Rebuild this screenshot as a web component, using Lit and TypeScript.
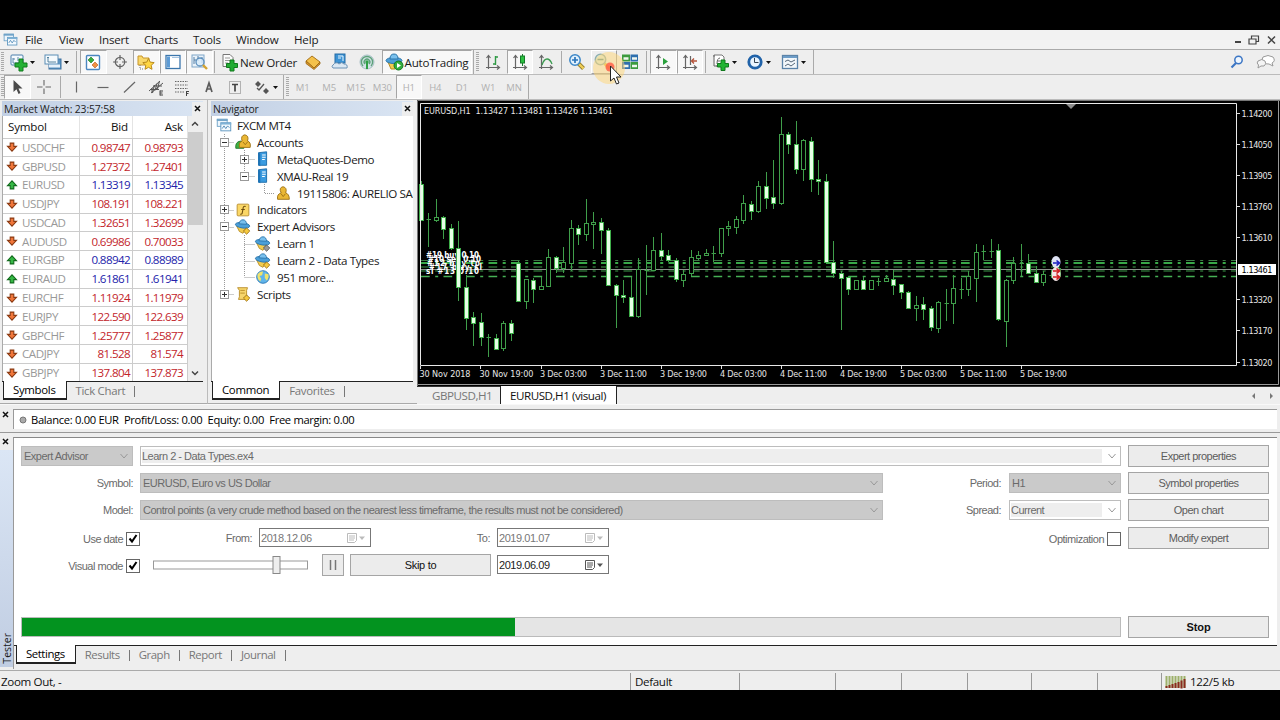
import { css, html, LitElement, svg, nothing } from "lit";
import type { SVGTemplateResult } from "lit";
import { customElement, property, state } from "lit/decorators.js";
import { classMap } from "lit/directives/class-map.js";
import { styleMap } from "lit/directives/style-map.js";

const icons: Record<string, SVGTemplateResult> = {
  app: svg`
    <rect x="2.5" y="3.5" width="11" height="8" fill="#eef6fc" stroke="#6fa3c8"/>
    <path d="M2 4.5h12" stroke="#6fa3c8" stroke-width="2"/>
    <rect x="6.5" y="7.5" width="11" height="9" fill="#f4fafe" stroke="#5b94be"/>
    <path d="M6 8.5h12" stroke="#7fb2d6" stroke-width="2"/>
    <path d="M8 14l2-3 2 3 2-3 2 2" fill="none" stroke="#4e88b5"/>`,
  newChart: svg`
    <rect x="2" y="3" width="12" height="10" rx="1" fill="#f4f9fd" stroke="#4b7fac"/>
    <path d="M4 6v5h8M4 7l2 0M9 5v4" fill="none" stroke="#5b87ab"/>
    <path d="M10 7h4v4h4v4h-4v4h-4v-4H6v-4h4z" fill="#25b135" stroke="#117a1d"/>`,
  profiles: svg`
    <rect x="6" y="7" width="12" height="10" fill="#5d95c3" stroke="#3d719f"/>
    <rect x="2" y="3" width="13" height="9" fill="#f5fafd" stroke="#5b8db5"/>
    <path d="M5 5v5h8M4 6l1-1 1 1" fill="none" stroke="#54829f"/>
    <path d="M6 14h11" stroke="#e7f1fa" stroke-width="3"/>`,
  marketWatch: svg`
    <rect x="3.5" y="3.5" width="13" height="14" rx="1" fill="#fff" stroke="#4b86c0" stroke-width="1.4"/>
    <path d="M8 5l3 3-3 3-3-3z" fill="#36ad3d" stroke="#1c7224" stroke-width=".6"/>
    <path d="M12 10l3 3-3 3-3-3z" fill="#f09043" stroke="#b85516" stroke-width=".6"/>`,
  dataWindow: svg`
    <circle cx="10" cy="10" r="4.7" fill="none" stroke="#666" stroke-width="1.3"/>
    <path d="M10 3v5M10 12v5M3 10h5M12 10h5" stroke="#666" stroke-width="1.2"/>`,
  navigator: svg`
    <path d="M2 4h4l1 2h6v7H2z" fill="#f9d86a" stroke="#c8962b"/>
    <path d="M4 13v4h4" fill="none" stroke="#777" stroke-dasharray="1 1"/>
    <path d="M12.500 6.500l1.700 3.600 4 .5-3 2.700.8 4-3.500-2-3.500 2 .8-4-3-2.700 4-.5z" fill="#ffd643" stroke="#b98a1b"/>`,
  terminal: svg`
    <rect x="3" y="3.500" width="14" height="13" fill="#fff" stroke="#3b76ac" stroke-width="1.3"/>
    <rect x="4" y="4.500" width="3" height="11" fill="#5d9cd6"/>
    <path d="M9 5.500h7" stroke="#a5c5e2"/>`,
  tester: svg`
    <rect x="3" y="3" width="12" height="12" fill="#eaf3fa" stroke="#7ea6c8"/>
    <path d="M5 5v7M9 4v5M13 5v6M5 8h2" stroke="#557fa5"/>
    <circle cx="11" cy="10" r="4" fill="#d7ebfa" fill-opacity=".8" stroke="#5b8ebc" stroke-width="1.3"/>
    <path d="M14 13l4 4" stroke="#d4a32f" stroke-width="2.400"/>`,
  newOrder: svg`
    <path d="M3 2.500h7l3 3v9H3z" fill="#fbfbfb" stroke="#777"/>
    <path d="M5 6h5M5 8.500h5M5 11h3" stroke="#999"/>
    <path d="M10 8h4v3.500h3.500v4H14V19h-4v-3.500H6.500v-4H10z" fill="#22ab33" stroke="#117a1d"/>`,
  metaEditor: svg`
    <path d="M3 9l6-5 8 6-6 6z" fill="#f4c14a" stroke="#a8741c"/>
    <path d="M3 9v2.500l8 6 6-5.500v-2l-6 6z" fill="#d7962a" stroke="#9a6714" stroke-width=".8"/>`,
  vps: svg`
    <rect x="5" y="2" width="10" height="9" fill="#3c93d4" stroke="#246ca6"/>
    <path d="M8 4h5v5M8 6h3" stroke="#e8f6ff" fill="none"/>
    <path d="M3 13q3-4 6-1 3-3 5 0 4 0 3 4H3q-2-2 0-3z" fill="#dbe8f3" stroke="#6b92b5"/>`,
  signals: svg`
    <circle cx="10" cy="10" r="7" fill="#d2e2e6" stroke="#a9bfc6"/>
    <path d="M6 14a5.600 5.600 0 1 1 8 0M8 12a2.800 2.800 0 1 1 4 0" fill="none" stroke="#5da27a" stroke-width="1.400"/>
    <circle cx="10" cy="10" r="1.700" fill="#2f9f46"/><path d="M10 11v6" stroke="#2f9f46" stroke-width="2"/>`,
  autoTrading: svg`
    <path d="M3 10h11l-4 7H6z" fill="#f3cc50" stroke="#b78d24"/>
    <ellipse cx="9" cy="8.500" rx="8" ry="3" fill="#4b9fd8" stroke="#2c76ab"/>
    <path d="M5 7q0-5 4-5t4 5z" fill="#79c0ed" stroke="#2c76ab"/>
    <circle cx="13.500" cy="13.500" r="4.500" fill="#32ae3c" stroke="#15761f"/>
    <path d="M12 11l4 2.500-4 2.500z" fill="#fff"/>`,
  bars: svg`
    <path d="M5.500 4v13M3 15.500h13M3.500 6l2-2.500 2 2.500M14 13.500l2.500 2-2.500 2" fill="none" stroke="#666" stroke-width="1.200"/>
    <path d="M12.500 4v9M10 12h2.500M12.500 5H15" stroke="#2e9a44" stroke-width="1.400"/>`,
  candles: svg`
    <path d="M5.500 4v13M3 15.500h13M3.500 6l2-2.500 2 2.500M14 13.500l2.500 2-2.500 2" fill="none" stroke="#666" stroke-width="1.200"/>
    <path d="M12.500 2v12" stroke="#167a28"/><rect x="10.500" y="4" width="4" height="7" fill="#2bc140" stroke="#167a28"/>`,
  line: svg`
    <path d="M5.500 4v13M3 15.500h13M3.500 6l2-2.500 2 2.500M14 13.500l2.500 2-2.500 2" fill="none" stroke="#666" stroke-width="1.200"/>
    <path d="M6 13q2-6 5-6t5 5" fill="none" stroke="#3a9a4f" stroke-width="1.300"/>`,
  zoomIn: svg`
    <path d="M11.500 11.500l5 5" stroke="#8f7a2a" stroke-width="4"/><path d="M12 12l4.500 4.500" stroke="#f0cf57" stroke-width="2.400"/>
    <circle cx="8" cy="8" r="5.200" fill="#e2f1fc" stroke="#3d87c7" stroke-width="1.500"/>
    <path d="M5 8h6M8 5v6" stroke="#2c76bb" stroke-width="1.700"/>`,
  zoomOut: svg`
    <path d="M10.500 11.500l5 5" stroke="#e5c050" stroke-width="3"/>
    <circle cx="6.500" cy="7.500" r="5.200" fill="#dcebdc" stroke="#8fb0b0" stroke-width="1.500"/>
    <path d="M3.500 7.500h6" stroke="#5e9292" stroke-width="1.500"/>`,
  tile: svg`
    <rect x="2" y="2.500" width="8" height="7" fill="#3c9b3e"/><rect x="10.500" y="2.500" width="7.500" height="7" fill="#2e6fae"/>
    <rect x="2" y="10" width="8" height="7" fill="#2e6fae"/><rect x="10.500" y="10" width="7.500" height="7" fill="#3c9b3e"/>
    <path d="M3.500 6.500h5M12 6.500h5M3.500 14h5M12 14h5" stroke="#f0f7ee" stroke-width="2.500"/>`,
  autoScroll: svg`
    <path d="M5.500 4v13M3 15.500h13M3.500 6l2-2.500 2 2.500M14 13.500l2.500 2-2.500 2" fill="none" stroke="#666" stroke-width="1.200"/>
    <path d="M10 6l5 3.500-5 3.500z" fill="#29a03b"/>`,
  shift: svg`
    <path d="M5.500 4v13M3 15.500h13M3.500 6l2-2.500 2 2.500M14 13.500l2.500 2-2.500 2M10.500 4v9" fill="none" stroke="#666" stroke-width="1.200"/>
    <path d="M17 9h-5M14 6.500L11.500 9l2.500 2.500" fill="none" stroke="#b5533a" stroke-width="1.300"/>`,
  indicators: svg`
    <path d="M3 5V3h8l2 2v9H5" fill="#fff" stroke="#777"/><path d="M3 3v11h8M6 12q0-6 3-6M6 9h3" fill="none" stroke="#666"/>
    <path d="M10 8h4v3.500h3.500v3.500H14V18.500h-4V15H6.500v-3.500H10z" fill="#22b433" stroke="#117a1d"/>`,
  periods: svg`
    <circle cx="10" cy="10" r="6.200" fill="#eaf5ff" stroke="#2163a9" stroke-width="2.800"/>
    <path d="M9.500 6v4.500h4" fill="none" stroke="#345"/>`,
  templates: svg`
    <rect x="2.500" y="3.500" width="15" height="13" fill="#f2f7fb" stroke="#5b83a8" stroke-width="1.300"/>
    <path d="M3 5h14" stroke="#6c9cc7" stroke-width="2"/><path d="M5 9.500l3-1.500 3 2 4-2M5 14l3-2 3 2 4-3" fill="none" stroke="#567"/>`,
  cursor: svg`<path d="M6.500 3v12l3-2.700 2 4.700 2-1-2-4.500h4z" fill="#4a4a4a"/>`,
  cross: svg`<path d="M10 3v5.500M10 11.500V17M3 10h5.500M11.500 10H17" stroke="#666" stroke-width="1.100"/>`,
  vline: svg`<path d="M10.500 4.500v11" stroke="#666" stroke-width="1.200"/>`,
  hline: svg`<path d="M4.500 10.500h11" stroke="#666" stroke-width="1.200"/>`,
  trend: svg`<path d="M5 15.500L16 5" stroke="#666" stroke-width="1.200"/>`,
  channel: svg`
    <path d="M3 14L14 4M5 16L17 6M6 11v4M8.500 8l-2 8M11 6.500l-2 7M13.500 4l-2 8M4 12.500h9M7 9h9" stroke="#555"/>
    <path d="M14 13.500v5M14 14h3M14 16h2.500M14 18h3" stroke="#444"/>`,
  fibo: svg`
    <path d="M3 4.500h13M3 8h13M3 11.500h13M3 15h9" stroke="#666" stroke-dasharray="1.500 1"/>
    <path d="M14.500 14v5M14 14.500h3M14 16.500h2.500" stroke="#444"/>`,
  textA: svg`<path d="M7 15L10 6l3 9M8 12h4" fill="none" stroke="#5b5b5b" stroke-width="1.700"/>`,
  label: svg`
    <rect x="4.500" y="4.500" width="11" height="12" fill="none" stroke="#777" stroke-dasharray="1 1"/>
    <path d="M7 7.500h6M10 7v7.500" stroke="#444" stroke-width="1.700"/>`,
  arrows: svg`
    <path d="M3 7l3-3 3 3-3 3zM11 14l3-3 3 3-3 3z" fill="#555"/><path d="M5 11l2 2 5-6" fill="none" stroke="#555" stroke-width="1.300"/>`,
  down: svg`<path d="M7 3.500h6V9h4.500L10 17 2.500 9H7z" fill="#f0763a" stroke="#8a3a12" stroke-width="1.800"/>`,
  up: svg`<path d="M7 16.500h6V11h4.500L10 3 2.500 11H7z" fill="#35b845" stroke="#126a1d" stroke-width="1.800"/>`,
  accounts: svg`
    <path d="M2 17q-1-7 5-8 5 1 4 8z" fill="#3cb043" stroke="#24752a"/>
    <path d="M6 16q-1-6 3-7-2-6 3-7 5 1 3 7 4 1 3 7z" fill="#eab734" stroke="#9b6f12"/>
    <path d="M10 10l2.500 3 2.500-3" fill="none" stroke="#9b6f12"/>`,
  server: svg`
    <path d="M5 3l9-1v15H5z" fill="#3a9be0" stroke="#1a6aa8"/><path d="M5 3v14l2 1V4z" fill="#1c74b8"/>
    <path d="M9 5.500h4M9 8h4M9 10.500h3" stroke="#fff" stroke-width="1.200"/>`,
  person: svg`
    <path d="M4 17q-1-6 4-7-3-6 2-7 5 1 3 7 4 1 4 7z" fill="#eab734" stroke="#9b6f12"/>
    <path d="M8 11l2.200 3 2.300-3" fill="none" stroke="#9b6f12"/>`,
  func: svg`
    <rect x="3.500" y="3.500" width="13" height="13" rx="1" fill="#fbd766" stroke="#b98d2c"/>
    <path d="M13 6q-3-1-3 3l-1 5q-1 1-2 .5M8 9.500h4" fill="none" stroke="#6d4c10" stroke-width="1.200"/>`,
  expert: svg`
    <path d="M3 9l11 1-4 7-4-2z" fill="#f3cc50" stroke="#b78d24"/>
    <ellipse cx="9.500" cy="8" rx="8" ry="3" fill="#4b9fd8" stroke="#2c76ab" transform="rotate(8 9 8)"/>
    <path d="M5.500 6.500q1-4.500 4.500-4.500t4 5z" fill="#79c0ed" stroke="#2c76ab"/>
    <path d="M14 11l3.500 3.500L14 18l-3.500-3.500z" fill="#f6c93e" stroke="#9b6f12"/>`,
  expertGrey: svg`
    <path d="M3 9l11 1-4 7-4-2z" fill="#f3cc50" stroke="#b78d24"/>
    <ellipse cx="9.500" cy="8" rx="8" ry="3" fill="#4b9fd8" stroke="#2c76ab" transform="rotate(8 9 8)"/>
    <path d="M5.500 6.500q1-4.500 4.500-4.500t4 5z" fill="#79c0ed" stroke="#2c76ab"/>
    <path d="M14 11l3.500 3.500L14 18l-3.500-3.500z" fill="#999" stroke="#555"/>`,
  globe: svg`
    <circle cx="10" cy="10" r="7" fill="#5fb4ea" stroke="#2d77b3"/>
    <path d="M4 7q3-4 6-3l-1 4-3 1 2 3-1 3q-4-3-3-8zM12 6l4 1q1 4-2 7l-2-3z" fill="#f2e36a"/>`,
  script: svg`
    <path d="M4 3h11l-1 3v7l2 3H5l1-3V6z" fill="#f7d66c" stroke="#b88c28"/>
    <path d="M7 6h5M7 9h5" stroke="#b88c28"/>
    <path d="M14 11l3.500 3.500L14 18l-3.500-3.500z" fill="#f6c93e" stroke="#9b6f12"/>`,
};

const icon = (name: string, size = 20) => html`
  <svg width=${size} height=${size} viewBox="0 0 20 20">${icons[name]}</svg>
`;

const caret = html`
  <svg width="7" height="20" viewBox="0 0 7 20"><path d="M1 9h5l-2.500 3z" fill="#111" /></svg>
`;

interface Tool {
  icon?: string;
  text?: string;
  kind?: "sep" | "grip" | "edge";
  menu?: boolean;
  pressed?: boolean;
  hover?: boolean;
  width?: number;
}

const MAIN_TOOLS: Tool[] = [
  { kind: "grip", width: 5.5 },
  { icon: "newChart", menu: true, width: 34 },
  { icon: "profiles", menu: true, width: 34 },
  { kind: "sep", width: 6.5 },
  { icon: "marketWatch", pressed: true },
  { icon: "dataWindow" },
  { icon: "navigator", pressed: true },
  { icon: "terminal", pressed: true },
  { icon: "tester", pressed: true },
  { kind: "sep", width: 4.5 },
  { icon: "newOrder", text: "New Order", width: 83 },
  { icon: "metaEditor" },
  { icon: "vps" },
  { icon: "signals", width: 28.5 },
  { icon: "autoTrading", text: "AutoTrading", pressed: true, width: 90 },
  { kind: "edge", width: 3 },
  { kind: "grip", width: 5.5 },
  { icon: "bars" },
  { icon: "candles", pressed: true },
  { icon: "line" },
  { kind: "sep", width: 4.5 },
  { icon: "zoomIn" },
  { icon: "zoomOut", hover: true },
  { icon: "tile" },
  { kind: "sep", width: 6.5 },
  { icon: "autoScroll", pressed: true },
  { icon: "shift", pressed: true },
  { kind: "sep", width: 4 },
  { icon: "indicators", menu: true, width: 34 },
  { icon: "periods", menu: true, width: 35 },
  { icon: "templates", menu: true, width: 35 },
  { kind: "edge", width: 4 },
];

const DRAW_TOOLS: Tool[] = [
  { kind: "grip", width: 4 },
  { icon: "cursor", pressed: true },
  { icon: "cross" },
  { kind: "sep", width: 6 },
  { icon: "vline" },
  { icon: "hline" },
  { icon: "trend" },
  { icon: "channel" },
  { icon: "fibo" },
  { icon: "textA" },
  { icon: "label" },
  { icon: "arrows", menu: true, width: 33 },
  { kind: "edge", width: 3 },
  { kind: "grip", width: 5 },
  { text: "M1" },
  { text: "M5" },
  { text: "M15" },
  { text: "M30" },
  { text: "H1", pressed: true },
  { text: "H4" },
  { text: "D1" },
  { text: "W1" },
  { text: "MN", width: 25 },
  { kind: "edge", width: 3 },
];

const QUOTES: [string, string, string, boolean][] = [
  ["USDCHF", "0.98747", "0.98793", false],
  ["GBPUSD", "1.27372", "1.27401", false],
  ["EURUSD", "1.13319", "1.13345", true],
  ["USDJPY", "108.191", "108.221", false],
  ["USDCAD", "1.32651", "1.32699", false],
  ["AUDUSD", "0.69986", "0.70033", false],
  ["EURGBP", "0.88942", "0.88989", true],
  ["EURAUD", "1.61861", "1.61941", true],
  ["EURCHF", "1.11924", "1.11979", false],
  ["EURJPY", "122.590", "122.639", false],
  ["GBPCHF", "1.25777", "1.25877", false],
  ["CADJPY", "81.528", "81.574", false],
  ["GBPJPY", "137.804", "137.873", false],
];

interface TreeNode {
  depth: number;
  icon: string;
  text: string;
  box?: "+" | "-";
}

const TREE: TreeNode[] = [
  { depth: 0, icon: "app", text: "FXCM MT4" },
  { depth: 1, icon: "accounts", text: "Accounts", box: "-" },
  { depth: 2, icon: "server", text: "MetaQuotes-Demo", box: "+" },
  { depth: 2, icon: "server", text: "XMAU-Real 19", box: "-" },
  { depth: 3, icon: "person", text: "19115806: AURELIO SAN" },
  { depth: 1, icon: "func", text: "Indicators", box: "+" },
  { depth: 1, icon: "expert", text: "Expert Advisors", box: "-" },
  { depth: 2, icon: "expertGrey", text: "Learn 1" },
  { depth: 2, icon: "expert", text: "Learn 2 - Data Types" },
  { depth: 2, icon: "globe", text: "951 more..." },
  { depth: 1, icon: "script", text: "Scripts", box: "+" },
];

// high, body top, body bottom, low, kind: f = bear, h = bull, x = doji
type Candle = [number, number, number, number, string];

const CANDLES: Candle[] = [
  [181, 184, 220, 220, "f"], [213, 219, 220, 247, "x"], [199, 217, 220, 222, "h"],
  [216, 217, 229, 239, "f"], [224, 228, 248, 250, "f"], [221, 248, 287, 301, "f"],
  [275, 287, 318, 330, "f"], [312, 317, 323, 346, "f"], [313, 322, 337, 346, "f"],
  [334, 337, 337, 357, "x"], [334, 338, 349, 350, "f"], [321, 323, 348, 351, "h"],
  [320, 323, 333, 341, "f"], [261, 263, 301, 302, "f"], [279, 279, 301, 309, "h"],
  [278, 280, 289, 303, "f"], [277, 286, 289, 290, "h"], [249, 257, 286, 286, "h"],
  [256, 257, 268, 273, "f"], [247, 262, 268, 273, "h"], [220, 228, 263, 271, "h"],
  [225, 228, 234, 245, "f"], [199, 223, 234, 241, "h"], [212, 222, 224, 249, "h"],
  [218, 222, 230, 254, "f"], [228, 230, 285, 286, "f"], [284, 285, 295, 328, "f"],
  [280, 295, 297, 303, "f"], [277, 297, 316, 317, "f"], [258, 269, 316, 318, "h"],
  [245, 270, 270, 295, "x"], [237, 250, 270, 271, "h"], [233, 250, 256, 260, "f"],
  [250, 255, 260, 262, "f"], [258, 260, 279, 282, "f"], [270, 274, 280, 287, "h"],
  [250, 257, 273, 276, "h"], [251, 255, 258, 260, "h"], [249, 253, 255, 256, "h"],
  [246, 253, 253, 262, "x"], [228, 228, 253, 257, "h"], [221, 226, 228, 236, "h"],
  [216, 219, 227, 234, "h"], [195, 203, 220, 224, "h"], [201, 204, 211, 220, "f"],
  [181, 186, 211, 213, "h"], [172, 186, 198, 209, "f"], [160, 197, 203, 209, "f"],
  [117, 134, 203, 205, "h"], [132, 134, 144, 154, "f"], [121, 144, 169, 174, "f"],
  [139, 140, 169, 181, "h"], [137, 141, 179, 192, "f"], [160, 179, 181, 195, "f"],
  [174, 181, 262, 263, "f"], [241, 262, 273, 278, "f"], [271, 273, 278, 330, "f"],
  [276, 277, 289, 295, "f"], [280, 280, 289, 289, "h"], [277, 280, 289, 290, "f"],
  [280, 280, 289, 289, "h"], [278, 281, 281, 286, "x"], [275, 278, 281, 282, "h"],
  [270, 279, 285, 295, "f"], [284, 284, 292, 299, "f"], [291, 292, 308, 308, "f"],
  [296, 305, 308, 321, "h"], [297, 304, 309, 320, "f"], [306, 308, 327, 331, "f"],
  [301, 302, 328, 333, "h"], [289, 303, 303, 321, "x"], [275, 288, 303, 324, "h"],
  [278, 289, 289, 299, "x"], [271, 276, 289, 296, "h"], [244, 252, 278, 302, "h"],
  [245, 251, 251, 260, "x"], [239, 251, 251, 258, "x"], [244, 250, 319, 321, "f"],
  [279, 280, 321, 347, "h"], [257, 263, 280, 284, "h"], [244, 263, 263, 276, "x"],
  [254, 263, 273, 274, "f"], [266, 273, 282, 283, "f"], [271, 274, 282, 286, "h"],
  [270, 275, 275, 278, "x"], [266, 268, 276, 277, "h"],
];

const PRICES: [number, string][] = [
  [113.5, "1.14200"], [144.5, "1.14050"], [175.5, "1.13905"], [206.5, "1.13760"], [237.5, "1.13610"],
  [299.5, "1.13320"], [330.5, "1.13170"], [362.5, "1.13020"],
];

const TIMES: [number, string, number][] = [
  [419.5, "30 Nov 2018", 51], [479.5, "30 Nov 19:00", 54], [540, "3 Dec 03:00", 47],
  [600, "3 Dec 11:00", 47], [660, "3 Dec 19:00", 47], [720, "4 Dec 03:00", 47],
  [780, "4 Dec 11:00", 47], [840, "4 Dec 19:00", 47], [900, "5 Dec 03:00", 47],
  [960, "5 Dec 11:00", 47], [1020, "5 Dec 19:00", 47],
];

const LEVELS: [number, number, string][] = [
  [260.5, 1, "#3d7a45"], [263, 2, "#38a848"], [267, 1, "#3d9a49"], [271, 1, "#3d9a49"], [276.5, 1.4, "#46b055"],
];

const LABELS: [number, number, string][] = [
  [426, 258, "#19 buy 0.10"], [428, 262, "#10 sell 0.10"], [427, 266, "#12 buy tp"],
  [429, 270, "#17 buy sl"], [426, 274, "sl #13 0.10"],
];

@customElement("price-chart")
export class PriceChart extends LitElement {
  renderCandle([high, top, bottom, low, kind]: Candle, i: number) {
    const x = 421 + i * 7.5;
    const cx = Math.floor(x) + 0.5;
    if (kind === "x") {
      return svg`<path class="wick" d="M${cx} ${high}V${low}M${cx - 2} ${top + 0.5}h4.5" />`;
    }
    return svg`
      <path class="wick" d="M${cx} ${high}V${low}" />
      <rect class=${kind} x=${cx - 2} y=${top + 0.5} width="4" height=${bottom - top} />
    `;
  }

  render() {
    return html`
      <svg width="863" height="286" viewBox="417 100 863 286">
        <rect x="417" y="100" width="863" height="286" fill="#000" />
        <path d="M417.500 386V100.500H1280" fill="none" stroke="#777" />
        <path d="M1278.500 101V384.500H418" fill="none" stroke="#999" />
        ${LEVELS.map(
          ([y, w, color]) =>
            svg`<path d="M421 ${y}H1236" stroke=${color} stroke-width=${w} stroke-dasharray="8.700 5.500 3 5.300" />`
        )}
        <path d="M421 269.500H1236" stroke="#8d918d" stroke-width="1" />
        ${LABELS.map(([x, y, text]) => svg`<text class="order" x=${x} y=${y} textLength="53">${text}</text>`)}
        ${CANDLES.map((c, i) => this.renderCandle(c, i))}
        <ellipse cx="1056" cy="262" rx="4.500" ry="6" fill="#dfe3f4" />
        <ellipse cx="1056" cy="274" rx="4.500" ry="7" fill="#f5e6e6" />
        <path d="M1053 263h6M1056.500 260.500l3 2.500-3 2.500" fill="none" stroke="#1a1fc0" stroke-width="1.600" />
        <path d="M1053 271h6M1056.500 268.500l3 2.500-3 2.500M1053 277h6M1056.500 274.500l3 2.500-3 2.500"
          fill="none" stroke="#d11c1c" stroke-width="1.600" />
        <path d="M420.500 365.500V103.500H1236.500V365.500z" fill="none" stroke="#e8e8e8" />
        <path d="M1066 104h10l-5 5z" fill="#8c8c8c" />
        <text class="axis" x="424" y="114" textLength="189">EURUSD,H1&#160; 1.13427 1.13481 1.13426 1.13461</text>
        ${PRICES.map(
          ([y, text]) => svg`
            <path d="M1237 ${y}h3" stroke="#ddd" />
            <text class="axis" x="1241.500" y=${y + 3.5} textLength="31">${text}</text>`
        )}
        <rect x="1238" y="264" width="38" height="11" fill="#fff" />
        <text class="axis now" x="1241.500" y="273" textLength="31">1.13461</text>
        ${TIMES.map(
          ([x, text, len]) => svg`
            <path d="M${Math.floor(x) + 1.5} 366v3" stroke="#ddd" />
            <text class="axis" x=${x} y="377" textLength=${len}>${text}</text>`
        )}
      </svg>
    `;
  }

  static styles = css`
    :host {
      display: block;
      height: 286px;
    }

    svg {
      display: block;
    }

    .wick {
      stroke: #3f9e4a;
      stroke-width: 1;
      fill: none;
    }

    .f {
      fill: #e6ffe6;
      stroke: #3fae4a;
    }

    .h {
      fill: #000;
      stroke: #3f9e4a;
    }

    .axis,
    .order {
      font-family: "DejaVu Sans Condensed", "DejaVu Sans", sans-serif;
      font-size: 9px;
      fill: #e6e6e6;
    }

    .order {
      font-weight: bold;
      font-size: 8px;
      fill: #fff;
    }

    .now {
      fill: #000;
    }
  `;
}

@customElement("tab-strip")
export class TabStrip extends LitElement {
  @property({ type: Array })
  tabs: string[] = [];

  @property()
  active: string = "";

  render() {
    return html`
      ${this.tabs.map(
        (tab) => html`<span class=${classMap({ tab: true, active: tab === this.active })}>${tab}</span>`
      )}
    `;
  }

  static styles = css`
    :host {
      display: flex;
      box-sizing: border-box;
      height: 19px;
      border-top: 1px solid #222;
      color: #777;
      font-size: 11.4px;
    }

    .tab {
      padding: 0 10px 0 9px;
      line-height: 17px;
      position: relative;
    }

    .tab:not(.active)::after {
      content: "";
      position: absolute;
      right: 0;
      top: 4px;
      height: 11px;
      border-right: 1px solid #777;
    }

    .active {
      margin-top: -1px;
      height: 19px;
      border: 1px solid #222;
      border-top: 0;
      border-bottom-width: 2px;
      background: #fff;
      color: #000;
      box-sizing: border-box;
    }
  `;
}

@customElement("app-root")
export class AppRoot extends LitElement {
  @state()
  progress = 494 / 1100;

  renderTool(t: Tool) {
    const width = { width: `${t.width ?? 26.5}px` };
    if (t.kind) {
      return html`<span class=${t.kind} style=${styleMap(width)}></span>`;
    }
    return html`
      <span
        class=${classMap({ tool: true, pressed: !!t.pressed, hover: !!t.hover, period: !t.icon })}
        style=${styleMap(width)}
      >
        ${t.icon ? icon(t.icon) : nothing}${t.text ? html`<b>${t.text}</b>` : nothing}${t.menu ? caret : nothing}
      </span>
    `;
  }

  renderTitle(text: string) {
    return html`<div class="title"><span>${text}</span><span class="close">${this.cross()}</span></div>`;
  }

  cross() {
    return html`
      <svg width="7" height="7" viewBox="0 0 7 7"><path d="M1 1l5 5M6 1L1 6" stroke="#111" stroke-width="1.500" /></svg>
    `;
  }

  renderMarketWatch() {
    return html`
      <section class="dock watch">
        ${this.renderTitle("Market Watch: 23:57:58")}
        <div class="quotes">
          <div class="table">
            <div class="quote head"><span>Symbol</span><span>Bid</span><span>Ask</span></div>
            ${QUOTES.map(
              ([name, bid, ask, up]) => html`
                <div class=${classMap({ quote: true, up })}>
                  <span>${icon(up ? "up" : "down", 12)}${name}</span><span>${bid}</span><span>${ask}</span>
                </div>
              `
            )}
          </div>
          <div class="scroll">
            <svg width="14" height="14" viewBox="0 0 14 14"><path d="M4 9.500l3-3 3 3" fill="none" stroke="#444" stroke-width="1.500" /></svg>
            <i></i>
            <svg width="14" height="14" viewBox="0 0 14 14"><path d="M4 4.500l3 3 3-3" fill="none" stroke="#444" stroke-width="1.500" /></svg>
          </div>
        </div>
        <tab-strip .tabs=${["Symbols", "Tick Chart"]} active="Symbols"></tab-strip>
      </section>
    `;
  }

  renderNavigator() {
    return html`
      <section class="dock nav">
        ${this.renderTitle("Navigator")}
        <div class="tree">
          <svg class="guides" width="200" height="264" viewBox="0 0 200 264">
            <path
              d="M12.500 18V178M12.500 26.500H22M12.500 94.500H22M12.500 111.500H22M12.500 178.500H22M32.500 34V60M32.500 43.500H43M32.500 60.500H43M52.500 68V77.500H63M32.500 119V161M32.500 128.500H43M32.500 145.500H43M32.500 161.500H43"
              fill="none" stroke="#999" stroke-dasharray="1 1"
            />
          </svg>
          ${TREE.map(
            (n) => html`
              <div class="node d${n.depth}">
                <span class="box">${n.box
                  ? html`<svg width="9" height="9" viewBox="0 0 9 9">
                      <rect x=".5" y=".5" width="8" height="8" fill="#fff" stroke="#999" />
                      <path d=${n.box === "+" ? "M2 4.500h5M4.500 2v5" : "M2 4.500h5"} stroke="#333" />
                    </svg>`
                  : nothing}</span>
                ${icon(n.icon, 18)}<span>${n.text}</span>
              </div>
            `
          )}
        </div>
        <tab-strip .tabs=${["Common", "Favorites"]} active="Common"></tab-strip>
      </section>
    `;
  }

  renderChevron() {
    return html`
      <svg class="chev" width="10" height="8" viewBox="0 0 10 8"><path d="M1.500 2L5 6l3.500-4" fill="none" stroke="#999" /></svg>
    `;
  }

  renderSelect(text: string, cls: string) {
    return html`<div class="select ${cls}"><span>${text}</span>${this.renderChevron()}</div>`;
  }

  renderDate(text: string, enabled = false) {
    return html`
      <div class=${classMap({ date: true, enabled })}>
        <span>${text}</span>
        <svg width="21" height="14" viewBox="0 0 21 14" fill="none" stroke="currentColor">
          <path d="M.5 2.500h9v7l-2 2h-7zM2 5h6M2 7h6M2 9h5" />
          <path d="M12 5.500h6l-3 3.500z" fill="currentColor" stroke="none" />
        </svg>
      </div>
    `;
  }

  renderCheck(checked: boolean) {
    return html`
      <svg class="check" width="14" height="14" viewBox="0 0 14 14">
        <rect x=".5" y=".5" width="13" height="13" fill="#fff" stroke="#666" />
        ${checked ? svg`<path d="M3.500 6.500l2.500 3L10.500 3" fill="none" stroke="#000" stroke-width="2" />` : nothing}
      </svg>
    `;
  }

  renderTester() {
    return html`
      <section class="tester">
        <div class="side">
          <span class="close">${this.cross()}</span>
          <div class="side-title"><span>Tester</span></div>
        </div>
        <div class="body">
          <div class="form">
            <div class="row">
              ${this.renderSelect("Expert Advisor", "grey kind")}
              ${this.renderSelect("Learn 2 - Data Types.ex4", "light file")}
              <button>Expert properties</button>
            </div>
            <div class="row">
              <label class="lead">Symbol:</label>
              ${this.renderSelect("EURUSD, Euro vs US Dollar", "grey wide")}
              <label class="mid">Period:</label>
              ${this.renderSelect("H1", "grey short")}
              <button>Symbol properties</button>
            </div>
            <div class="row">
              <label class="lead">Model:</label>
              ${this.renderSelect(
                "Control points (a very crude method based on the nearest less timeframe, the results must not be considered)",
                "grey wide"
              )}
              <label class="mid">Spread:</label>
              ${this.renderSelect("Current", "light short")}
              <button>Open chart</button>
            </div>
            <div class="row">
              <label class="lead with-check">Use date ${this.renderCheck(true)}</label>
              <label class="from">From:</label>
              ${this.renderDate("2018.12.06")}
              <label class="to">To:</label>
              ${this.renderDate("2019.01.07")}
              <label class="opt with-check">Optimization ${this.renderCheck(false)}</label>
              <button>Modify expert</button>
            </div>
            <div class="row">
              <label class="lead with-check">Visual mode ${this.renderCheck(true)}</label>
              <svg class="slider" width="157" height="18" viewBox="0 0 157 18">
                <rect x=".5" y="5" width="154" height="8" fill="#fff" stroke="#999" />
                <rect x="120" y=".5" width="7" height="17" fill="#eee" stroke="#888" />
              </svg>
              <button class="pause">
                <svg width="10" height="12" viewBox="0 0 10 12"><path d="M2.500 1v10M7.500 1v10" stroke="#777" stroke-width="1.500" /></svg>
              </button>
              <button class="skip">Skip to</button>
              ${this.renderDate("2019.06.09", true)}
            </div>
            <div class="row run">
              <div class="progress"><i style=${styleMap({ width: `${this.progress * 100}%` })}></i></div>
              <button class="stop">Stop</button>
            </div>
          </div>
          <tab-strip .tabs=${["Settings", "Results", "Graph", "Report", "Journal"]} active="Settings"></tab-strip>
        </div>
      </section>
    `;
  }

  render() {
    return html`
      <div class="window">
        <nav class="menu">
          ${icon("app", 17)}
          <span class="m-file">File</span><span class="m-view">View</span><span class="m-insert">Insert</span
          ><span class="m-charts">Charts</span><span class="m-tools">Tools</span><span class="m-window">Window</span
          ><span>Help</span>
          <svg class="controls" width="46" height="12" viewBox="0 0 46 12" fill="none" stroke="#444">
            <path d="M1 8h6" stroke-width="2" />
            <path d="M17.500 4.500V2h7v5.500H22M15 5h7v5h-7z" stroke-width="1.200" />
            <path d="M34 2.500l7 7M41 2.500l-7 7" stroke-width="1.500" />
          </svg>
        </nav>
        <div class="bar main-bar">
          ${MAIN_TOOLS.map((t) => this.renderTool(t))}
          <span class="right-tools">
            <svg width="14" height="14" viewBox="0 0 14 14">
              <circle cx="8.500" cy="5" r="3.700" fill="#eef6ff" stroke="#3c76c4" stroke-width="1.500" />
              <path d="M6 8l-4.500 4.500" stroke="#3c76c4" stroke-width="2.200" />
            </svg>
            <svg width="20" height="14" viewBox="0 0 20 14">
              <path d="M7 2q5-3 10 0 3 4-1 6l1 3-4-2q-6 0-7-3 0-2 1-4z" fill="#fff" stroke="#999" />
              <path d="M2 6q4-3 7 0 2 3-1 5H5l-3 2 .5-3Q0 8 2 6z" fill="#f4f4f4" stroke="#999" />
            </svg>
          </span>
        </div>
        <div class="bar draw-bar">${DRAW_TOOLS.map((t) => this.renderTool(t))}</div>
        <main>
          ${this.renderMarketWatch()} ${this.renderNavigator()}
          <section class="charts">
            <price-chart></price-chart>
            <div class="chart-tabs">
              <span>GBPUSD,H1</span><span class="on">EURUSD,H1 (visual)</span>
              <svg width="24" height="8" viewBox="0 0 24 8" fill="#777"><path d="M4 1v6L1 4zM19 1v6l3-3z" /></svg>
            </div>
          </section>
        </main>
        <div class="account">
          <span class="close">${this.cross()}</span>
          <div class="line">
            <svg width="8" height="8" viewBox="0 0 8 8"><circle cx="4" cy="4" r="3" fill="#aaa" stroke="#777" /></svg>
            <span>Balance: 0.00 EUR&nbsp; Profit/Loss: 0.00&nbsp; Equity: 0.00&nbsp; Free margin: 0.00</span>
          </div>
        </div>
        ${this.renderTester()}
        <footer>
          <span class="hint">Zoom Out, -</span><span class="profile">Default</span><span class="c1"></span
          ><span class="c2"></span><span class="c2"></span><span class="c3"></span><span class="c2"></span
          ><span class="c3"></span>
          <span class="net">
            <svg width="23" height="14" viewBox="0 0 23 14">
              <path d="M1.500 1v12M4.500 1v12M7.500 1v12M10.500 1v12M13.500 1v12M16.500 1v12M19.500 1v12" stroke="#9db06a" stroke-width="2" />
              <path d="M1.500 11v2M4.500 10v3M7.500 9v4M10.500 8v5M13.500 7v6M16.500 5.500v8M19.500 4v9" stroke="#8a2a1e" stroke-width="2" />
            </svg>
            122/5 kb
          </span>
        </footer>
      </div>
      <svg class="pointer" width="34" height="38" viewBox="0 0 34 38">
        <circle cx="17" cy="17" r="16" fill="#ffd573" fill-opacity=".5" />
        <circle cx="18" cy="16" r="4.500" fill="#ff5a45" fill-opacity=".8" />
        <path d="M18.500 15v15l3.500-3 2.500 6 2.500-1-2.500-6h4.500z" fill="#fff" stroke="#222" />
      </svg>
    `;
  }

  static styles = css`
    :host {
      display: block;
      box-sizing: border-box;
      width: 1280px;
      height: 720px;
      padding: 30px 0;
      overflow: hidden;
      background: #000;
      position: relative;
      font-family: "Open Sans", "Noto Sans", sans-serif;
      font-size: 11.6px;
      color: #1a1a1a;
    }

    * {
      box-sizing: border-box;
    }

    svg {
      flex: none;
    }

    .window {
      height: 660px;
      background: #eee;
      display: flex;
      flex-direction: column;
      overflow: hidden;
      white-space: nowrap;
    }

    .menu {
      height: 19px;
      flex: none;
      display: flex;
      align-items: center;
      padding-left: 2px;
      background: #f2f2f2;
      letter-spacing: -0.2px;
    }

    .m-file {
      margin-left: 6px;
      width: 34px;
    }

    .m-view {
      width: 40px;
    }

    .m-insert {
      width: 45px;
    }

    .m-charts {
      width: 49px;
    }

    .m-tools {
      width: 43px;
    }

    .m-window {
      width: 58px;
    }

    .controls {
      margin-left: auto;
    }

    .bar {
      height: 25px;
      flex: none;
      display: flex;
      align-items: center;
      border-top: 1px solid #aaa;
    }

    .draw-bar {
      height: 26px;
      border-top-color: #bbb;
      border-bottom: 1px solid #bbb;
    }

    .tool {
      height: 24px;
      flex: none;
      display: flex;
      align-items: center;
      justify-content: center;
      border: 1px solid transparent;
      background-clip: padding-box;
    }

    .tool b {
      font-weight: 400;
      letter-spacing: -0.25px;
    }

    .period b {
      font-size: 9.5px;
      letter-spacing: -0.1px;
      color: #b0b0b0;
    }

    .pressed {
      border-color: #a5a5a5 #fff #fff #a5a5a5;
      background: #f8f8f8;
    }

    .hover {
      border-color: #fff #a0a0a0 #a0a0a0 #fff;
    }

    .sep,
    .edge {
      height: 22px;
      flex: none;
      background: linear-gradient(#aaa, #aaa) center / 1px 100% no-repeat;
    }

    .edge {
      height: 24px;
    }

    .grip {
      height: 20px;
      flex: none;
      background: repeating-linear-gradient(#aaa 0 1px, #eee 1px 2px) center / 3px 100% no-repeat;
    }

    .right-tools {
      margin-left: auto;
      padding-right: 4px;
      display: flex;
      gap: 12px;
    }

    main {
      height: 305px;
      flex: none;
      display: flex;
    }

    .dock {
      display: flex;
      flex-direction: column;
      height: 304px;
      padding-top: 1px;
      border-bottom: 1px solid #aaa;
    }

    .watch {
      width: 208px;
      padding-left: 2px;
      padding-right: 4px;
      border-right: 1px solid #bbb;
    }

    .nav {
      width: 209px;
      padding-left: 3px;
      padding-right: 4px;
    }

    .title {
      height: 15px;
      flex: none;
      display: flex;
      align-items: center;
      justify-content: space-between;
      padding-left: 2px;
      background: linear-gradient(90deg, #c2d0e4, #dae5f3);
      font-size: 10.4px;
      letter-spacing: -0.15px;
      color: #222;
    }

    .close {
      width: 11px;
      height: 14px;
      display: flex;
      align-items: center;
      justify-content: center;
      background: #eee;
    }

    .quotes {
      height: 265px;
      display: flex;
      overflow: hidden;
      background: #fff;
      border-left: 1px solid #aaa;
    }

    .table {
      width: 185px;
    }

    .quote {
      height: 18.77px;
      display: grid;
      grid-template-columns: 77px 53px 55px;
      align-items: stretch;
      color: #c2252b;
      border-bottom: 1px solid #ccc;
      letter-spacing: -0.6px;
    }

    .quote span {
      display: flex;
      align-items: center;
      justify-content: flex-end;
      padding-right: 2px;
      border-right: 1px solid #ccc;
    }

    .quote span:last-child {
      padding-right: 4px;
    }

    .quote span:first-child {
      justify-content: flex-start;
      padding-left: 3px;
      gap: 4px;
      color: #999;
      letter-spacing: -0.45px;
    }

    .quote.up {
      color: #2222aa;
    }

    .quote.head,
    .quote.head span:first-child {
      color: #111;
      letter-spacing: -0.2px;
    }

    .quote.head {
      height: 22.5px;
    }

    .quote.head span {
      border-color: #e4e4e4;
      padding-right: 4px;
    }

    .quote.head span:first-child {
      padding-left: 5px;
    }

    .scroll {
      width: 15px;
      background: #eee;
      display: flex;
      flex-direction: column;
    }

    .scroll i {
      height: 93px;
      margin-top: 2px;
      margin-bottom: auto;
      background: #cdcdcd;
    }

    .tree {
      height: 265px;
      background: #fff;
      border-left: 1px solid #aaa;
      overflow: hidden;
      position: relative;
      letter-spacing: -0.4px;
    }

    .guides {
      position: absolute;
      left: 0;
      top: 0;
    }

    .node {
      height: 16.9px;
      display: flex;
      align-items: center;
      position: relative;
      top: 1px;
    }

    .node span:last-child {
      margin-left: 5px;
    }

    .node .box {
      width: 14px;
      flex: none;
      display: flex;
    }

    .d0 {
      padding-left: 3px;
    }

    .node.d0 .box {
      width: 0;
    }

    .node.d0 span:last-child {
      margin-left: 4px;
    }

    .d1 {
      padding-left: 8px;
    }

    .d2 {
      padding-left: 28px;
    }

    .d3 {
      padding-left: 48px;
    }

    .charts {
      width: 863px;
    }

    .chart-tabs {
      height: 19px;
      display: flex;
      align-items: center;
      border-top: 1px solid #333;
      color: #777;
      letter-spacing: -0.45px;
    }

    .chart-tabs span {
      width: 83px;
      line-height: 16px;
      padding-left: 15px;
    }

    .chart-tabs .on {
      width: 117px;
      padding: 0 0 0 9px;
      height: 19px;
      margin-top: -1px;
      line-height: 19px;
      background: #fff;
      border: 1px solid #222;
      border-top: 0;
      color: #111;
    }

    .chart-tabs svg {
      margin-left: auto;
      margin-right: 5px;
    }

    .account {
      height: 28px;
      flex: none;
      display: flex;
      padding-top: 4px;
      border-top: 1px solid #f8f8f8;
      margin-top: -1px;
      padding-right: 3px;
    }

    .account .close {
      width: 11px;
      height: 11px;
    }

    .account .line {
      margin-left: 2px;
      flex: 1;
      height: 20px;
      border: 1px solid #999;
      border-bottom: 0;
      border-right: 0;
      background: #fff;
      display: flex;
      align-items: center;
      padding-left: 5px;
      gap: 4px;
      font-size: 11.2px;
      letter-spacing: -0.32px;
      color: #000;
    }

    .tester {
      height: 238px;
      flex: none;
      display: flex;
      padding-top: 1px;
      border-top: 1px solid #999;
      padding-right: 3px;
    }

    .side {
      width: 13px;
      display: flex;
      flex-direction: column;
    }

    .side-title {
      margin-top: 2px;
      height: 217px;
      background: linear-gradient(#dbe6f5, #c0cde2);
      display: flex;
      align-items: flex-end;
      justify-content: center;
      padding-bottom: 3px;
    }

    .side-title span {
      writing-mode: vertical-rl;
      transform: rotate(180deg);
      font-size: 10.5px;
      line-height: 12px;
    }

    .body {
      margin-top: 3px;
      flex: 1;
      height: 232px;
      border-left: 1px solid #999;
      border-top: 1px solid #888;
    }

    .form {
      height: 207px;
      padding: 4px 0 0 7px;
      background: #fff;
      font-family: "Liberation Sans", Arial, sans-serif;
      font-size: 11px;
      letter-spacing: -0.5px;
      color: #6a6a6a;
    }

    .row {
      height: 27.3px;
      display: flex;
      align-items: center;
    }

    .select {
      height: 20px;
      display: flex;
      align-items: center;
      justify-content: space-between;
      padding: 0 3px 0 2px;
      border: 1px solid #bdbdbd;
    }

    .grey {
      background: #cacaca;
    }

    .light {
      background: #fff;
      padding-left: 1px;
    }

    .light span {
      flex: 1;
      height: 14px;
      margin-right: 5px;
      background: #eee;
      line-height: 14px;
    }

    .kind {
      width: 112px;
      margin-right: 7px;
    }

    .file {
      width: 981px;
    }

    .wide {
      width: 743px;
    }

    .short {
      width: 112px;
    }

    .lead {
      width: 112px;
      margin-right: 7px;
      text-align: right;
    }

    .mid {
      width: 126px;
      padding-right: 8px;
      text-align: right;
    }

    .with-check {
      display: flex;
      align-items: center;
      justify-content: flex-end;
      gap: 3px;
      padding-top: 3px;
    }

    .lead.with-check {
      width: 119px;
      margin: 0;
    }

    .from {
      width: 119px;
      padding-right: 7px;
      text-align: right;
    }

    .to {
      width: 126px;
      padding-right: 7px;
      text-align: right;
    }

    .opt {
      width: 512px;
    }

    .date {
      width: 112px;
      height: 19px;
      border: 1px solid #777;
      background: #fff;
      display: flex;
      align-items: center;
      justify-content: space-between;
      padding: 0 2px 0 1px;
      letter-spacing: -0.45px;
      color: #777;
    }

    .date svg {
      color: #bbb;
    }

    .date.enabled {
      color: #222;
    }

    .enabled svg {
      color: #555;
    }

    .slider {
      margin-left: 13px;
    }

    button {
      width: 141px;
      height: 22px;
      margin: 0 0 0 7px;
      padding: 0;
      border: 1px solid #a5a5a5;
      background: #ececec;
      font: inherit;
      letter-spacing: inherit;
      color: #5c5c5c;
      display: flex;
      align-items: center;
      justify-content: center;
    }

    .pause {
      width: 22px;
      margin-left: 12px;
    }

    .skip {
      margin-left: 6px;
      margin-right: 6px;
      color: #111;
      letter-spacing: -0.3px;
    }

    .run {
      margin-top: 35px;
    }

    .progress {
      width: 1100px;
      height: 20px;
      border: 1px solid #bbb;
      background: #e5e5e5;
    }

    .progress i {
      display: block;
      height: 100%;
      background: #03931f;
    }

    .stop {
      font-weight: bold;
      letter-spacing: -0.1px;
      color: #111;
    }

    .body tab-strip {
      padding-left: 2px;
      letter-spacing: -0.45px;
    }

    .dock tab-strip {
      padding-left: 1px;
      letter-spacing: -0.3px;
    }

    footer {
      flex: 1;
      display: flex;
      align-items: center;
      padding-top: 2px;
      border-top: 1px solid #aaa;
      letter-spacing: -0.35px;
      color: #111;
    }

    footer > span {
      height: 17px;
      line-height: 17px;
      border-left: 1px solid #999;
    }

    footer .hint {
      width: 630px;
      border: 0;
      padding-left: 1px;
    }

    .profile {
      width: 109px;
      padding-left: 4px;
    }

    .c1 {
      width: 96px;
    }

    .c2 {
      width: 66px;
    }

    .c3 {
      width: 64px;
    }

    .net {
      display: flex;
      align-items: center;
      gap: 2px;
      padding-left: 3px;
    }

    .pointer {
      position: absolute;
      left: 592px;
      top: 51px;
    }
  `;
}
